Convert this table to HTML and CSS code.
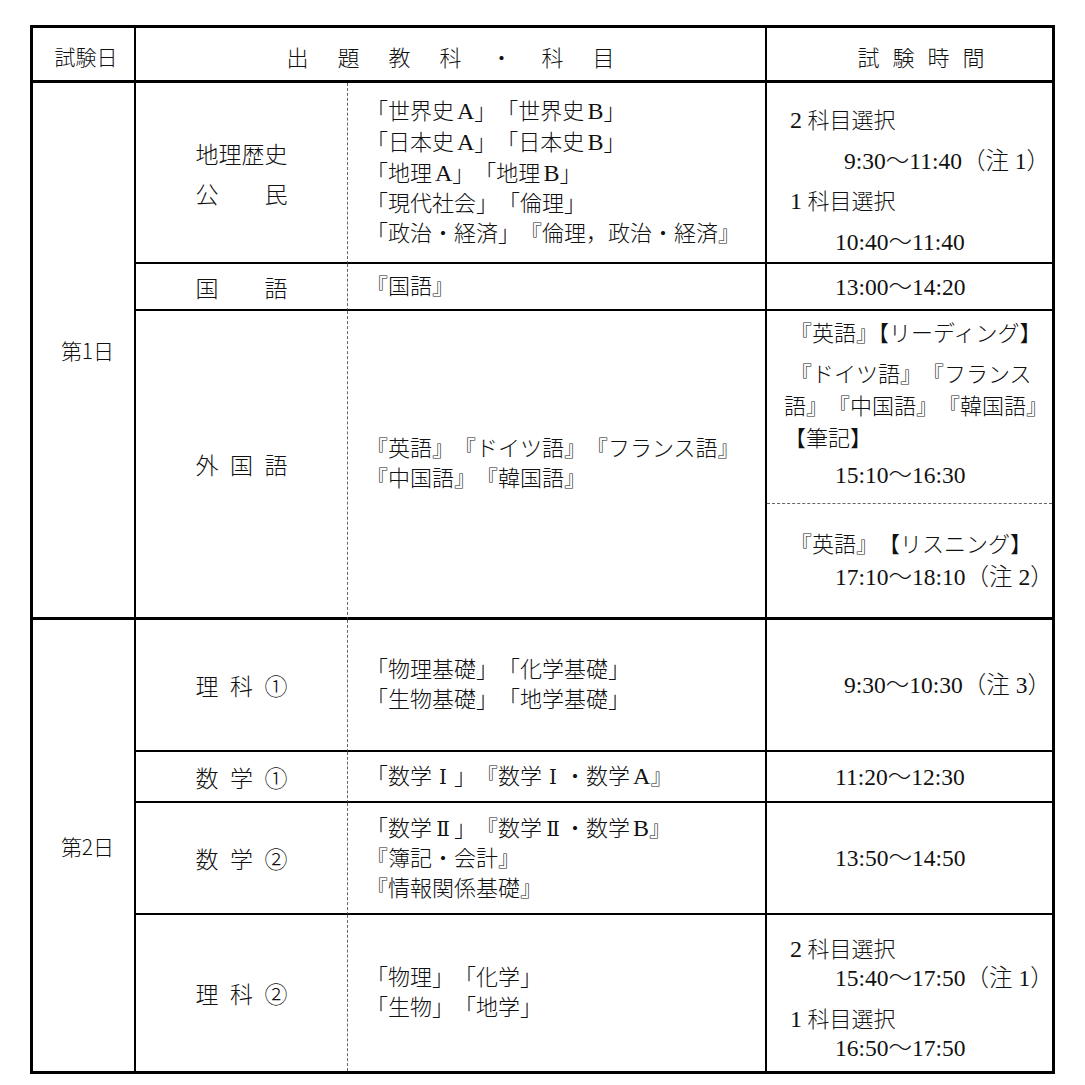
FILE: index.html
```html
<!DOCTYPE html>
<html lang="ja">
<head>
<meta charset="utf-8">
<title>試験時間割</title>
<link rel="stylesheet" href="styles.css">
</head>
<body>
<div class="sched">
  <div class="c hd c1 h1">試験日</div>
  <div class="c hd h23"><span>出</span><span>題</span><span>教</span><span>科</span><span>・</span><span>科</span><span>目</span></div>
  <div class="c hd c4 h4"><span>試</span><span>験</span><span>時</span><span>間</span></div>

  <div class="c c1 day span4 bt">第1日</div>
  <div class="c c2 bb"><div class="sj r1"><span class="jw">地理歴史</span><span class="jw">公民</span></div></div>
  <div class="c c3 bb">
    <div>「世界史<span class="n">A</span>」「世界史<span class="n">B</span>」</div>
    <div>「日本史<span class="n">A</span>」「日本史<span class="n">B</span>」</div>
    <div>「地理<span class="n">A</span>」「地理<span class="n">B</span>」</div>
    <div>「現代社会」「倫理」</div>
    <div>「政治・経済」『倫理，政治・経済』</div>
  </div>
  <div class="c c4 bb t1">
    <div class="sel"><span class="n">2</span> 科目選択</div>
    <div class="tm t9">9:30～11:40（注 1）</div>
    <div class="sel"><span class="n">1</span> 科目選択</div>
    <div class="tm">10:40～11:40</div>
  </div>

  <div class="c c2 bb"><div class="sj"><span class="jw">国語</span></div></div>
  <div class="c c3 bb"><div>『国語』</div></div>
  <div class="c c4 bb"><div class="tm">13:00～14:20</div></div>

  <div class="c c2 span2 bt"><div class="sj"><span class="jw">外国語</span></div></div>
  <div class="c c3 span2 bt">
    <div>『英語』『ドイツ語』『フランス語』</div>
    <div>『中国語』『韓国語』</div>
  </div>
  <div class="c c4 bd t3a">
    <div class="ind l32 g9 trim">『英語』【リーディング】</div>
    <div class="ind l32">『ドイツ語』『フランス語』『中国語』『韓国語』【筆記】</div>
    <div class="tm l32 g4">15:10～16:30</div>
  </div>
  <div class="c c4 bt t3b">
    <div class="ind">『英語』【リスニング】</div>
    <div class="tm">17:10～18:10（注 2）</div>
  </div>

  <div class="c c1 day span4">第2日</div>
  <div class="c c2 bb"><div class="sj"><span class="jw">理科①</span></div></div>
  <div class="c c3 bb">
    <div>「物理基礎」「化学基礎」</div>
    <div>「生物基礎」「地学基礎」</div>
  </div>
  <div class="c c4 bb"><div class="tm t9">9:30～10:30（注 3）</div></div>

  <div class="c c2 bb"><div class="sj"><span class="jw">数学①</span></div></div>
  <div class="c c3 bb"><div>「数学<span class="rn">Ⅰ</span>」『数学<span class="rn">Ⅰ</span>・数学<span class="n">A</span>』</div></div>
  <div class="c c4 bb"><div class="tm">11:20～12:30</div></div>

  <div class="c c2 bb"><div class="sj"><span class="jw">数学②</span></div></div>
  <div class="c c3 bb">
    <div>「数学<span class="rn">Ⅱ</span>」『数学<span class="rn">Ⅱ</span>・数学<span class="n">B</span>』</div>
    <div>『簿記・会計』</div>
    <div>『情報関係基礎』</div>
  </div>
  <div class="c c4 bb"><div class="tm">13:50～14:50</div></div>

  <div class="c c2"><div class="sj"><span class="jw">理科②</span></div></div>
  <div class="c c3">
    <div>「物理」「化学」</div>
    <div>「生物」「地学」</div>
  </div>
  <div class="c c4 t7">
    <div class="sel"><span class="n">2</span> 科目選択</div>
    <div class="tm">15:40～17:50（注 1）</div>
    <div class="sel gap"><span class="n">1</span> 科目選択</div>
    <div class="tm">16:50～17:50</div>
  </div>
</div>
</body>
</html>
```

FILE: styles.css
```css
* { box-sizing: border-box; }
html, body { margin: 0; padding: 0; background: #fff; }
body {
  font-family: "Liberation Serif", "Noto Sans CJK JP", serif;
  color: #111;
  font-weight: 300;
  text-spacing-trim: space-all;
}
.sched {
  display: grid;
  grid-template-columns: 103px 212px 419px 285px;
  grid-template-rows: 55px 181px 47px 193px 116px 132px 51px 112px 156px;
  width: 1025px;
  margin: 25px 0 0 30px;
  border: 3px solid #000;
}
.c {
  display: flex;
  flex-direction: column;
  justify-content: center;
  min-width: 0;
}
.c1 { grid-column: 1; border-right: 2px solid #000; }
.c2 { grid-column: 2; border-right: 1px dashed #666; align-items: center; }
.c3 {
  grid-column: 3;
  border-right: 2px solid #000;
  padding-left: 18px;
  font-size: 22px;
  line-height: 30px;
}
.c4 { grid-column: 4; padding-left: 17px; font-size: 22px; line-height: 32px; }

.hd {
  flex-direction: row;
  align-items: center;
  justify-content: center;
  border-bottom: 3px solid #000;
  font-family: "Noto Sans CJK JP", sans-serif;
  font-size: 22px;
  padding-top: 4px;
}
.h1 { font-size: 21px; padding-left: 5px; }
.h23 { grid-column: 2 / 4; border-right: 2px solid #000; gap: 29px; }
.h4 { gap: 13px; padding-left: 23px; }

.bb { border-bottom: 2px solid #000; }
.bt { border-bottom: 3px solid #000; }
.bd { border-bottom: 1px dashed #666; }
.span4 { grid-row: span 4; }
.span2 { grid-row: span 2; }

.day {
  align-items: center;
  padding-left: 8px;
  font-family: "Noto Sans CJK JP", sans-serif;
  font-size: 21px;
}

.sj {
  font-family: "Noto Sans CJK JP", sans-serif;
  font-size: 23px;
  line-height: 40px;
}
.jw {
  display: block;
  width: 4em;
  text-align: justify;
  text-align-last: justify;
}

.n { font-size: 24px; margin-left: 3px; }
.rn {
  display: inline-block;
  width: 1em;
  text-align: center;
  font-family: "DejaVu Serif", "Liberation Serif", serif;
  font-size: 20px;
  margin: 0 1px;
}
.sel { padding-left: 6px; }
.sel .n { margin-left: 0; }
.tm {
  font-size: 23.5px;
  padding-left: 51px;
  white-space: nowrap;
  text-spacing-trim: normal;
}
.t9 { padding-left: 60px; }
.ind { text-indent: 6px; }
.trim { text-spacing-trim: normal; }

.t1 { line-height: 40px; padding-top: 16px; }
.t3a { padding-bottom: 6px; }
.l32 { line-height: 32px; }
.g9 { margin-bottom: 9px; }
.g4 { margin-top: 4px; }
.t3b { line-height: 33px; }
.t7 { line-height: 29px; padding-top: 12px; }
.gap { margin-top: 12px; }
```
